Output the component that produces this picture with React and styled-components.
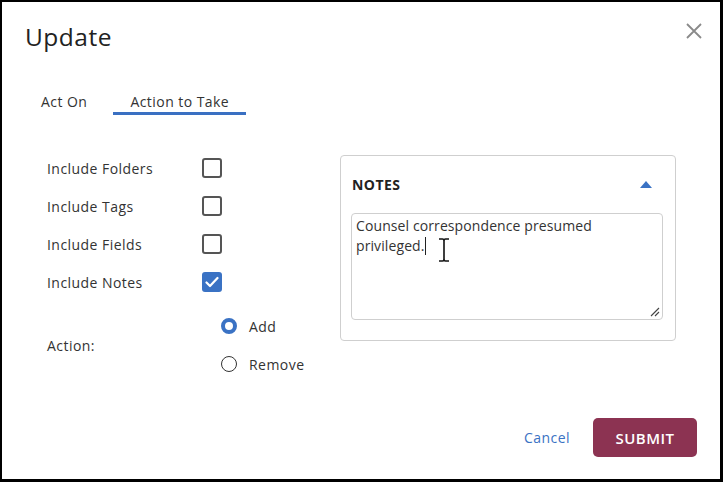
import React from "react";
import styled, { createGlobalStyle } from "styled-components";

const Global = createGlobalStyle`
  html, body { margin: 0; padding: 0; background: #000; }
  body { font-family: "Open Sans", "Noto Sans", sans-serif; color: #333; letter-spacing: 0.45px; }
  * { box-sizing: border-box; }
`;

const Dialog = styled.div`
  margin: 2px 3px 0 2px;
  width: 718px;
  height: 477px;
  background: #fff;
  display: flex;
  flex-direction: column;
`;

const Header = styled.div`
  display: flex;
  justify-content: space-between;
  align-items: flex-start;
  padding: 19px 16px 0 23px;
`;

const Title = styled.h1`
  margin: 0;
  font-size: 24.5px;
  line-height: 32px;
  font-weight: 400;
  color: #222;
  letter-spacing: 0.5px;
`;

const Close = styled.button`
  border: 0;
  background: none;
  padding: 0;
  margin-top: 0;
  width: 20px;
  height: 20px;
  display: flex;
  align-items: center;
  justify-content: center;
`;

const Tabs = styled.div`
  display: flex;
  gap: 9px;
  padding: 39px 0 0 22px;
`;

const Tab = styled.div`
  padding: 0 17px;
  line-height: 20px;
  font-size: 14px;
  color: #333;
  border-bottom: 3px solid ${(p) => (p.$active ? "#3a70c2" : "transparent")};
`;

const Body = styled.div`
  display: flex;
  align-items: flex-start;
  padding: 34px 0 0 45px;
`;

const LeftCol = styled.div`
  width: 293px;
  display: flex;
  flex-direction: column;
`;

const Row = styled.div`
  height: 38px;
  display: flex;
  align-items: center;
`;

const Label = styled.div`
  width: ${(p) => p.$w || 155}px;
  font-size: 14px;
  color: #333;
`;

const Box = styled.div`
  width: 20px;
  height: 20px;
  border-radius: 3px;
  border: ${(p) => (p.$checked ? "none" : "2px solid #555")};
  background: ${(p) => (p.$checked ? "#3a72c4" : "#fff")};
  display: flex;
  align-items: center;
  justify-content: center;
`;

const ActionRow = styled.div`
  display: flex;
  align-items: center;
  margin-top: 15px;
`;

const RadioGroup = styled.div`
  display: flex;
  flex-direction: column;
  gap: 18px;
`;

const RadioItem = styled.div`
  display: flex;
  align-items: center;
  gap: 12px;
  font-size: 14px;
  color: #333;
  height: 20px;
`;

const RadioCircle = styled.span`
  width: 16px;
  height: 16px;
  border-radius: 50%;
  border: ${(p) => (p.$on ? "4.5px solid #3a72c4" : "1.5px solid #333")};
  background: #fff;
  display: inline-block;
`;

const Panel = styled.div`
  margin-top: 6px;
  width: 336px;
  height: 186px;
  border: 1px solid #cfcfcf;
  border-radius: 4px;
  padding: 18px 0 0 10px;
`;

const PanelHeader = styled.div`
  display: flex;
  justify-content: space-between;
  align-items: center;
  padding: 0 23px 0 1px;
  height: 20px;
`;

const PanelTitle = styled.div`
  font-size: 14px;
  font-weight: 700;
  color: #222;
`;

const NotesBox = styled.div`
  position: relative;
  margin-top: 19px;
  width: 312px;
  height: 107px;
  border: 1px solid #cfcfcf;
  border-radius: 4px;
  padding: 2px 4px;
  font-size: 14px;
  line-height: 20px;
  letter-spacing: 0.1px;
  color: #333;
`;

const Caret = styled.span`
  display: inline-block;
  width: 1px;
  height: 18px;
  background: #222;
  vertical-align: -4px;
`;

const IBeam = styled.svg`
  position: absolute;
  left: 85px;
  top: 24px;
`;

const Grip = styled.svg`
  position: absolute;
  right: 2px;
  bottom: 2px;
`;

const Footer = styled.div`
  margin-top: auto;
  display: flex;
  justify-content: flex-end;
  align-items: center;
  gap: 23px;
  padding: 0 23px 22px 0;
`;

const Cancel = styled.button`
  border: 0;
  background: none;
  padding: 0;
  font-family: inherit;
  letter-spacing: inherit;
  font-size: 14px;
  color: #3a72c4;
`;

const Submit = styled.button`
  border: 0;
  width: 104px;
  height: 39px;
  border-radius: 5px;
  background: #8c3352;
  color: #fff;
  font-family: inherit;
  letter-spacing: inherit;
  font-size: 15px;
  font-weight: 600;
`;

const Check = () => (
  <svg width="14" height="12" viewBox="0 0 14 12">
    <path d="M1.5 6.5 L5 10 L12.5 2" fill="none" stroke="#fff" strokeWidth="2.2" strokeLinecap="round" strokeLinejoin="round" />
  </svg>
);

const items = [
  ["Include Folders", false],
  ["Include Tags", false],
  ["Include Fields", false],
  ["Include Notes", true],
];

export default function App() {
  return (
    <>
      <Global />
      <Dialog>
        <Header>
          <Title>Update</Title>
          <Close aria-label="Close">
            <svg width="16" height="16" viewBox="0 0 16 16">
              <path d="M1 1 L15 15 M15 1 L1 15" stroke="#8a8a8a" strokeWidth="1.8" />
            </svg>
          </Close>
        </Header>
        <Tabs>
          <Tab>Act On</Tab>
          <Tab $active>Action to Take</Tab>
        </Tabs>
        <Body>
          <LeftCol>
            {items.map(([t, c]) => (
              <Row key={t}>
                <Label>{t}</Label>
                <Box $checked={c}>{c && <Check />}</Box>
              </Row>
            ))}
            <ActionRow>
              <Label $w={174}>Action:</Label>
              <RadioGroup>
                <RadioItem>
                  <RadioCircle $on />
                  Add
                </RadioItem>
                <RadioItem>
                  <RadioCircle />
                  Remove
                </RadioItem>
              </RadioGroup>
            </ActionRow>
          </LeftCol>
          <Panel>
            <PanelHeader>
              <PanelTitle>NOTES</PanelTitle>
              <svg width="12" height="7" viewBox="0 0 12 7">
                <path d="M0 7 L6 0 L12 7 Z" fill="#3a72c4" />
              </svg>
            </PanelHeader>
            <NotesBox>
              Counsel correspondence presumed privileged.
              <Caret />
              <IBeam width="14" height="24" viewBox="0 0 14 24">
                <path d="M2 1 H5.5 Q7 1 7 3 V21 Q7 23 5.5 23 H2 M12 1 H8.5 Q7 1 7 3 M7 21 Q7 23 8.5 23 H12" fill="none" stroke="#111" strokeWidth="1.6" />
              </IBeam>
              <Grip width="10" height="10" viewBox="0 0 10 10">
                <path d="M9 1 L1 9 M9 5 L5 9" stroke="#444" strokeWidth="1.1" />
              </Grip>
            </NotesBox>
          </Panel>
        </Body>
        <Footer>
          <Cancel>Cancel</Cancel>
          <Submit>SUBMIT</Submit>
        </Footer>
      </Dialog>
    </>
  );
}
